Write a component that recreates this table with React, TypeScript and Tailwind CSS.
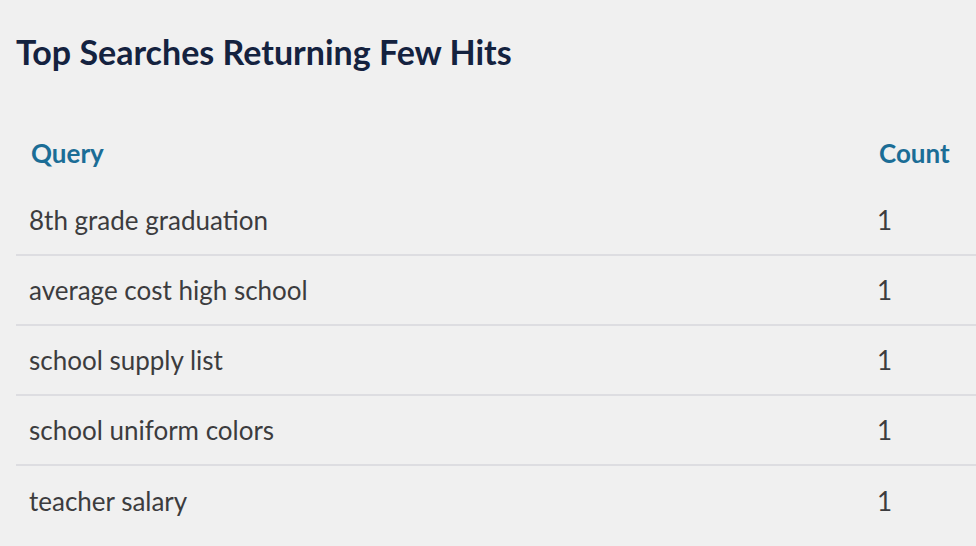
const rows = [
  { query: "8th grade graduation", count: 1 },
  { query: "average cost high school", count: 1 },
  { query: "school supply list", count: 1 },
  { query: "school uniform colors", count: 1 },
  { query: "teacher salary", count: 1 },
];

export default function App() {
  return (
    <div className="min-h-screen bg-[#f0f0f0] pl-4 pt-[33px] font-['Lato','Liberation_Sans',sans-serif]">
      <h2 className="text-[34px] leading-[38px] font-bold text-[#14223f]">
        Top Searches Returning Few Hits
      </h2>

      <div className="mt-[49px]">
        {/* header */}
        <div className="flex h-[66px] items-center text-[26px] font-bold text-[#1b6d96]">
          <div className="flex-1 pl-[15px]">Query</div>
          <div className="w-[112px] pl-[15px]">Count</div>
        </div>

        {rows.map((r, i) => (
          <div
            key={r.query}
            className={`flex h-[70px] items-center text-[26px] text-[#3c3c3e] ${
              i < rows.length - 1 ? "border-b-2 border-[#dddde1]" : ""
            }`}
          >
            <div className="flex-1 pl-[13px]">{r.query}</div>
            <div className="w-[112px] pl-[13px]">{r.count}</div>
          </div>
        ))}
      </div>
    </div>
  );
}
